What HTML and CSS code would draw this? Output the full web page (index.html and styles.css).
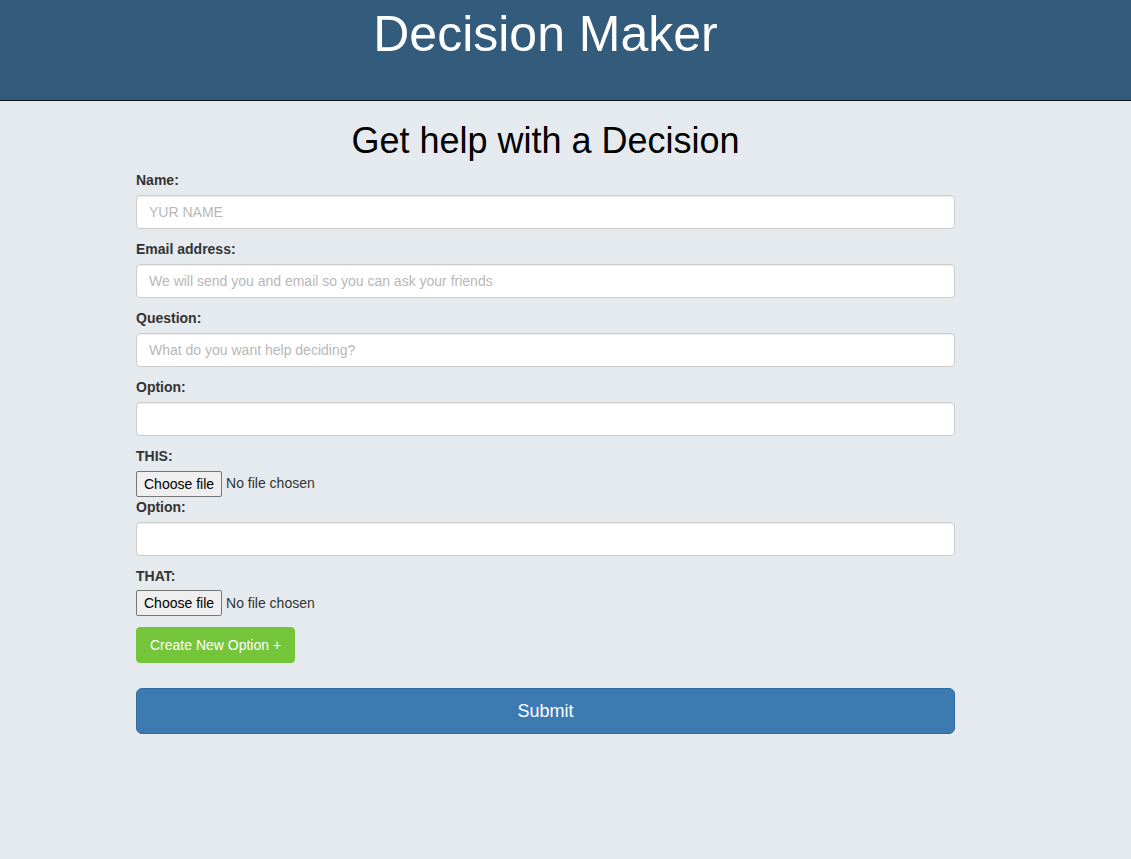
FILE: index.html
```html
<!DOCTYPE html>
<html lang="en">
<head>
<meta charset="utf-8">
<title>Decision Maker</title>
<link rel="stylesheet" href="styles.css">
</head>
<body>
<header class="site-header">
  <h1 class="site-title">Decision Maker</h1>
</header>
<main class="page">
  <h1 class="page-title">Get help with a Decision</h1>
  <form class="poll-form">
    <div class="form-group">
      <label class="field-label" for="name">Name:</label>
      <input class="form-control" id="name" type="text" placeholder="YUR NAME">
    </div>
    <div class="form-group">
      <label class="field-label" for="email">Email address:</label>
      <input class="form-control" id="email" type="email" placeholder="We will send you and email so you can ask your friends">
    </div>
    <div class="form-group">
      <label class="field-label" for="question">Question:</label>
      <input class="form-control" id="question" type="text" placeholder="What do you want help deciding?">
    </div>
    <div class="form-group">
      <label class="field-label" for="opt1">Option:</label>
      <input class="form-control" id="opt1" type="text">
    </div>
    <div class="file-group">
      <label class="field-label" for="file1">THIS:</label>
      <label class="file-picker">
        <input class="file-native" id="file1" type="file">
        <span class="file-button">Choose file</span>
        <span class="file-status">No file chosen</span>
      </label>
    </div>
    <div class="form-group">
      <label class="field-label" for="opt2">Option:</label>
      <input class="form-control" id="opt2" type="text">
    </div>
    <div class="file-group">
      <label class="field-label" for="file2">THAT:</label>
      <label class="file-picker">
        <input class="file-native" id="file2" type="file">
        <span class="file-button">Choose file</span>
        <span class="file-status">No file chosen</span>
      </label>
    </div>
    <button class="btn btn-add" type="button">Create New Option +</button>
    <button class="btn btn-submit" type="submit">Submit</button>
  </form>
</main>
</body>
</html>
```
FILE: styles.css
```css
* { box-sizing: border-box; }

html, body {
  margin: 0;
  padding: 0;
}

body {
  background: #e5eaee;
  font-family: "Liberation Sans", Arial, Helvetica, sans-serif;
  font-size: 14px;
  line-height: 1.42857;
  color: #333;
  min-height: 859px;
}

.site-header {
  background: #335b7c;
  height: 101px;
  border-bottom: 1px solid #111;
  padding-top: 7px;
}

.site-title {
  margin: 0 0 0 136px;
  width: 819px;
  text-align: center;
  font-size: 50px;
  font-weight: 400;
  line-height: 55px;
  color: #fff;
}

.page {
  width: 819px;
  margin-left: 136px;
}

.page-title {
  margin: 20px 0 9px;
  text-align: center;
  font-size: 36px;
  font-weight: 400;
  line-height: 1.1;
  color: #000;
}

.poll-form {
  display: flex;
  flex-direction: column;
  align-items: stretch;
}

.form-group {
  display: flex;
  flex-direction: column;
  margin-bottom: 10px;
}

.file-group {
  display: flex;
  flex-direction: column;
  align-items: flex-start;
}

.field-label {
  display: block;
  font-weight: 700;
  padding-top: 1px;
  margin-bottom: 4px;
  align-self: flex-start;
}

.form-control {
  display: block;
  width: 100%;
  height: 34px;
  padding: 6px 12px;
  font-family: inherit;
  font-size: 14px;
  line-height: 1.42857;
  color: #555;
  background: #fff;
  border: 1px solid #ccc;
  border-radius: 4px;
  box-shadow: inset 0 1px 1px rgba(0,0,0,.075);
}

.form-control::placeholder {
  color: #b8b8b8;
}

.file-picker {
  display: flex;
  align-items: center;
  gap: 4px;
  cursor: pointer;
}

.file-native {
  position: absolute;
  width: 1px;
  height: 1px;
  opacity: 0;
  overflow: hidden;
}

.file-button {
  display: block;
  height: 26px;
  padding: 2px 7px;
  line-height: 20px;
  color: #000;
  background: #efefef;
  border: 1px solid #767676;
  border-radius: 2px;
}

.file-status {
  color: #333;
  padding-top: 1px;
}

.btn {
  font-family: inherit;
  cursor: pointer;
  color: #fff;
  text-align: center;
}

.btn-add {
  align-self: flex-start;
  margin-top: 11px;
  padding: 7px 13px;
  font-size: 14px;
  line-height: 20px;
  background: #75c53a;
  border: 1px solid #75c53a;
  border-radius: 4px;
}

.btn-submit {
  margin-top: 25px;
  width: 100%;
  padding: 10px 16px;
  font-size: 18px;
  line-height: 24px;
  background: #3e7ab2;
  border: 1px solid #2e69a0;
  border-radius: 6px;
}
```
